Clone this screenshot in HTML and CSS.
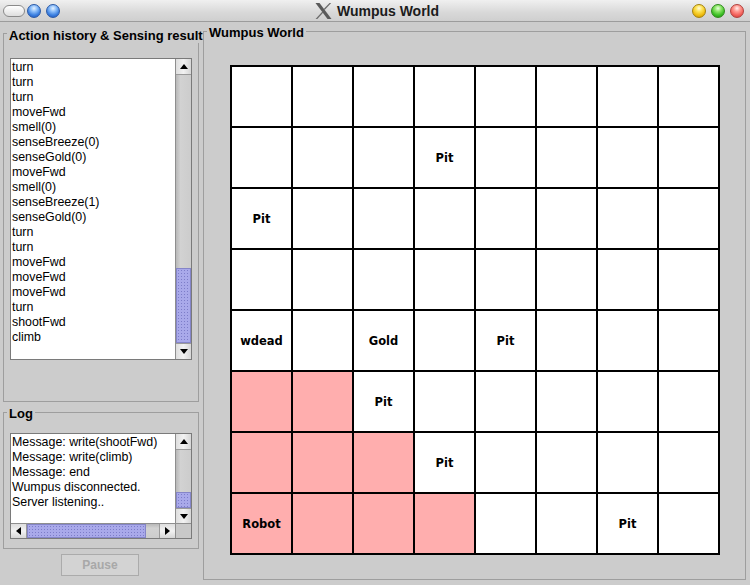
FILE: index.html
```html
<!DOCTYPE html>
<html>
<head>
<meta charset="utf-8">
<title>Wumpus World</title>
<link rel="stylesheet" href="styles.css">
</head>
<body>
<div class="titlebar">
  <div class="tb-left">
    <span class="pill"></span>
    <span class="orb blue"></span>
    <span class="orb blue"></span>
  </div>
  <div class="tb-title">
    <svg class="xlogo" width="17" height="16" viewBox="0 0 17 16">
      <polygon points="0.5,0 4.5,0 16.5,16 12.5,16" fill="#5a5a5a"/>
      <polygon points="14.5,0 16.2,0 9.6,7.1 8.7,5.9" fill="#6a6a6a"/>
      <polygon points="7.4,8.4 8.3,9.6 2.3,16 0.6,16" fill="#6a6a6a"/>
    </svg>
    <span class="tb-text">Wumpus World</span>
  </div>
  <div class="tb-right">
    <span class="orb yellow"></span>
    <span class="orb green"></span>
    <span class="orb red"></span>
  </div>
</div>

<div class="main">
  <div class="side">
    <fieldset class="box history">
      <legend>Action history &amp; Sensing result</legend>
      <div class="list">
        <div class="list-text">
          <div>turn</div>
          <div>turn</div>
          <div>turn</div>
          <div>moveFwd</div>
          <div>smell(0)</div>
          <div>senseBreeze(0)</div>
          <div>senseGold(0)</div>
          <div>moveFwd</div>
          <div>smell(0)</div>
          <div>senseBreeze(1)</div>
          <div>senseGold(0)</div>
          <div>turn</div>
          <div>turn</div>
          <div>moveFwd</div>
          <div>moveFwd</div>
          <div>moveFwd</div>
          <div>turn</div>
          <div>shootFwd</div>
          <div>climb</div>
        </div>
        <div class="vscroll">
          <div class="sbtn up"><span class="tri-up"></span></div>
          <div class="track"><div class="thumb history-thumb"></div></div>
          <div class="sbtn down"><span class="tri-down"></span></div>
        </div>
      </div>
    </fieldset>

    <fieldset class="box log">
      <legend>Log</legend>
      <div class="logarea">
        <div class="log-text">
          <div>Message: write(shootFwd)</div>
          <div>Message: write(climb)</div>
          <div>Message: end</div>
          <div>Wumpus disconnected.</div>
          <div>Server listening..</div>
        </div>
        <div class="vscroll">
          <div class="sbtn up"><span class="tri-up"></span></div>
          <div class="track"><div class="thumb log-vthumb"></div></div>
          <div class="sbtn down short"><span class="tri-down"></span></div>
        </div>
        <div class="hscroll">
          <div class="hbtn left"><span class="tri-left"></span></div>
          <div class="hthumb"></div>
          <div class="htrack"></div>
          <div class="hbtn right"><span class="tri-right"></span></div>
        </div>
        <div class="corner"></div>
      </div>
    </fieldset>

    <button class="pause" disabled>Pause</button>
  </div>

  <fieldset class="box world">
    <legend>Wumpus World</legend>
    <div class="grid">
      <div class="c"></div><div class="c"></div><div class="c"></div><div class="c"></div><div class="c"></div><div class="c"></div><div class="c"></div><div class="c"></div>
      <div class="c"></div><div class="c"></div><div class="c"></div><div class="c">Pit</div><div class="c"></div><div class="c"></div><div class="c"></div><div class="c"></div>
      <div class="c">Pit</div><div class="c"></div><div class="c"></div><div class="c"></div><div class="c"></div><div class="c"></div><div class="c"></div><div class="c"></div>
      <div class="c"></div><div class="c"></div><div class="c"></div><div class="c"></div><div class="c"></div><div class="c"></div><div class="c"></div><div class="c"></div>
      <div class="c">wdead</div><div class="c"></div><div class="c">Gold</div><div class="c"></div><div class="c">Pit</div><div class="c"></div><div class="c"></div><div class="c"></div>
      <div class="c p"></div><div class="c p"></div><div class="c">Pit</div><div class="c"></div><div class="c"></div><div class="c"></div><div class="c"></div><div class="c"></div>
      <div class="c p"></div><div class="c p"></div><div class="c p"></div><div class="c">Pit</div><div class="c"></div><div class="c"></div><div class="c"></div><div class="c"></div>
      <div class="c p">Robot</div><div class="c p"></div><div class="c p"></div><div class="c p"></div><div class="c"></div><div class="c"></div><div class="c">Pit</div><div class="c"></div>
    </div>
  </fieldset>
</div>
</body>
</html>
```

FILE: styles.css
```css
* { box-sizing: border-box; }
html, body { margin: 0; padding: 0; }
body {
  width: 750px;
  height: 585px;
  overflow: hidden;
  background: #cccccc;
  font-family: "Liberation Sans", Arial, sans-serif;
  color: #000;
}

/* ---------- title bar ---------- */
.titlebar {
  height: 22px;
  display: flex;
  align-items: center;
  background: linear-gradient(#f0f0f0, #d8d8d8 60%, #cfcfcf);
  border-bottom: 1px solid #9c9c9c;
}
.tb-left {
  width: 62px;
  display: flex;
  align-items: center;
  padding-left: 3px;
}
.pill {
  width: 22px;
  height: 12px;
  border-radius: 6px;
  border: 1px solid #8a8a8a;
  background: linear-gradient(#ffffff, #dedede);
  margin-right: 2px;
}
.orb {
  width: 14px;
  height: 14px;
  border-radius: 50%;
  display: block;
}
.tb-left .orb + .orb { margin-left: 5px; }
.blue {
  border: 1px solid #2a59a6;
  background: radial-gradient(circle at 50% 28%, #e6f2ff 0, #8fc0fa 30%, #3a7fe0 65%, #1d4fb8 100%);
}
.yellow {
  border: 1px solid #a5820c;
  background: radial-gradient(circle at 50% 28%, #fffbe0 0, #fde45a 30%, #f0be10 65%, #c08a00 100%);
}
.green {
  border: 1px solid #2f8a1c;
  background: radial-gradient(circle at 50% 28%, #eaffe0 0, #8ee66a 30%, #3cbf25 65%, #1e8a12 100%);
}
.red {
  border: 1px solid #b0403c;
  background: radial-gradient(circle at 50% 28%, #fff0ee 0, #ff9c94 30%, #f2605a 65%, #c63a34 100%);
}
.tb-title {
  flex: 1;
  display: flex;
  justify-content: center;
  align-items: center;
  gap: 5px;
}
.xlogo { display: block; }
.tb-text {
  font-weight: bold;
  font-size: 14px;
  color: #1c1c1c;
}
.tb-right {
  display: flex;
  align-items: center;
  gap: 5px;
  padding-right: 6px;
}

/* ---------- main layout ---------- */
.main {
  display: flex;
  height: 563px;
  padding-left: 3px;
  gap: 4px;
}
.side {
  width: 196px;
  display: flex;
  flex-direction: column;
}

.box {
  margin: 0;
  min-width: 0;
  border: 1px solid #9e9e9e;
}
.box legend {
  font-weight: bold;
  font-size: 13px;
  line-height: 15px;
  white-space: nowrap;
  padding: 3px 2px 0;
  margin-left: -3px;
  color: #000;
}

.history {
  margin-top: 1px;
  height: 379px;
  padding: 15px 6px 0;
}
.history legend { padding-top: 5px; }
.log {
  margin-top: 1px;
  height: 146px;
  padding: 12px 6px 0;
}

.world {
  width: 543px;
  height: 558px;
  padding: 0;
}
.world legend {
  margin-left: 3px;
}

/* ---------- list ---------- */
.list {
  height: 302px;
  border: 1px solid #7a7a7a;
  background: #fff;
  display: flex;
}
.list-text, .log-text {
  flex: 1;
  font-size: 12.4px;
  line-height: 15px;
  padding: 1px 0 0 1px;
  white-space: nowrap;
  overflow: hidden;
}

.vscroll {
  width: 16px;
  border-left: 1px solid #8e8e8e;
  display: flex;
  flex-direction: column;
  background: #c6c6c6;
}
.sbtn {
  height: 16px;
  background: linear-gradient(90deg, #dedede, #f2f2f2 50%, #d6d6d6);
  display: flex;
  align-items: center;
  justify-content: center;
}
.sbtn.up { border-bottom: 1px solid #9a9a9a; }
.sbtn.down { border-top: 1px solid #9a9a9a; }
.sbtn.short { height: 15px; }
.track {
  flex: 1;
  display: flex;
  flex-direction: column;
  justify-content: flex-end;
  background: linear-gradient(90deg, #b8b8b8, #d2d2d2 30%, #cccccc);
}
.thumb, .hthumb {
  background-color: #a9a9ea;
  background-image: radial-gradient(circle, #7d7dc9 0.7px, transparent 1px);
  background-size: 3px 3px;
  border: 1px solid #8585c8;
}
.history-thumb { height: 75px; }
.log-vthumb { height: 16px; }

.tri-up, .tri-down, .tri-left, .tri-right {
  width: 0;
  height: 0;
  display: block;
}
.tri-up {
  border-left: 4px solid transparent;
  border-right: 4px solid transparent;
  border-bottom: 5px solid #000;
}
.tri-down {
  border-left: 4px solid transparent;
  border-right: 4px solid transparent;
  border-top: 5px solid #000;
}
.tri-left {
  border-top: 4px solid transparent;
  border-bottom: 4px solid transparent;
  border-right: 5px solid #000;
}
.tri-right {
  border-top: 4px solid transparent;
  border-bottom: 4px solid transparent;
  border-left: 5px solid #000;
}

/* ---------- log area ---------- */
.logarea {
  height: 106px;
  border: 1px solid #7a7a7a;
  background: #fff;
  display: grid;
  grid-template-columns: 1fr 16px;
  grid-template-rows: 1fr 15px;
}
.log-text { overflow: hidden; }
.hscroll {
  display: flex;
  border-top: 1px solid #8e8e8e;
  background: #c6c6c6;
}
.hbtn {
  width: 16px;
  background: linear-gradient(#dedede, #f2f2f2 50%, #d6d6d6);
  display: flex;
  align-items: center;
  justify-content: center;
}
.hbtn.left { border-right: 1px solid #9a9a9a; }
.hbtn.right { border-left: 1px solid #9a9a9a; }
.hthumb { width: 119px; }
.htrack {
  flex: 1;
  background: linear-gradient(#b8b8b8, #d2d2d2 30%, #cccccc);
}
.corner {
  background: #c8c8c8;
  border-top: 1px solid #8e8e8e;
  border-left: 1px solid #8e8e8e;
}

/* ---------- pause ---------- */
.pause {
  margin: 5px 0 0 58px;
  width: 78px;
  height: 22px;
  border: 1px solid #ababab;
  background: #d3d3d3;
  font-family: "Liberation Sans", Arial, sans-serif;
  font-weight: bold;
  font-size: 12px;
  color: #a8a8a8;
  padding: 0;
}

/* ---------- grid ---------- */
.grid {
  margin: 25px 0 0 26px;
  width: 490px;
  height: 490px;
  border: 1px solid #000;
  display: grid;
  grid-template-columns: repeat(8, 61px);
  grid-template-rows: repeat(8, 61px);
  background: #fff;
}
.c {
  border: 1px solid #000;
  background: #fff;
  display: flex;
  align-items: center;
  justify-content: center;
  font-family: "DejaVu Sans", sans-serif;
  font-weight: bold;
  font-size: 11.5px;
}
.c.p { background: #ffaeae; }
```
